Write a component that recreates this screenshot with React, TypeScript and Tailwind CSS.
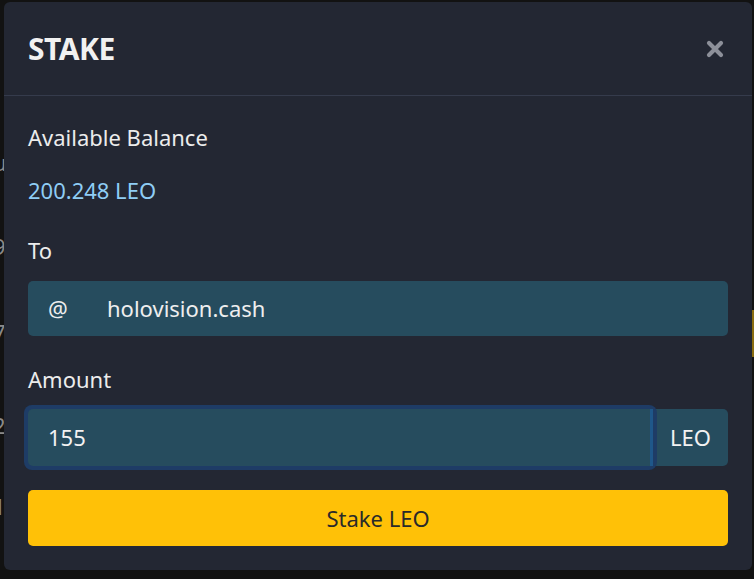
import React from "react";

export default function App() {
  const font = { fontFamily: '"Noto Sans", "Open Sans", sans-serif' };
  return (
    <div className="relative w-[754px] h-[579px] bg-[#121212] overflow-hidden" style={font}>
      {/* underlying page slivers */}
      <div className="absolute left-[-7px] top-0 text-[22px] text-[#8a8a8a] leading-none">
        <div className="absolute top-[151px]">u</div>
        <div className="absolute top-[235px]">9</div>
        <div className="absolute top-[321px]">7</div>
        <div className="absolute top-[414px]">2</div>
        <div className="absolute top-[495px]">1</div>
      </div>
      <div className="absolute right-0 top-[310px] w-[2px] h-[47px] bg-[#8a6d10]" />

      <div className="relative ml-[4px] mt-[2px] w-[748px] h-[568px] rounded-[6px] bg-[#232733] flex flex-col">
        <div className="h-[94px] px-6 flex items-center justify-between border-b border-[#353b4c]">
          <div className="text-[30px] font-bold text-[#f1f1f1] tracking-[-0.5px]">STAKE</div>
          <svg width="18" height="18" viewBox="0 0 18 18" className="mr-[4px]">
            <path d="M3 3 L15 15 M15 3 L3 15" stroke="#8d909a" strokeWidth="4.2" strokeLinecap="round" />
          </svg>
        </div>
        <div className="px-6 pt-[28px] flex flex-col">
          <div className="text-[22px] leading-[26px] text-[#ececec]">Available Balance</div>
          <div className="mt-[27px] text-[22px] leading-[26px] text-[#8fcdf5]">200.248 LEO</div>
          <div className="mt-[34px] text-[22px] leading-[26px] text-[#ececec]">To</div>
          <div className="mt-[18px] h-[55px] rounded-[5px] bg-[#264c5e] flex items-center text-[22px] text-[#eeeeee]">
            <span className="pl-[20px] w-[79px]">@</span>
            <span>holovision.cash</span>
          </div>
          <div className="mt-[30px] text-[22px] leading-[26px] text-[#ececec]">Amount</div>
          <div className="mt-[17px] h-[57px] flex">
            <div className="relative flex-1">
              <div className="absolute inset-[-4px] rounded-[8px] bg-[#1e3c66]" />
              <div className="relative h-full rounded-l-[5px] bg-[#264c5e] border-r-[3px] border-[#1f5789] flex items-center pl-[20px] text-[22px] text-[#f2f2f2]">
                155
              </div>
            </div>
            <div className="w-[75px] h-full rounded-r-[5px] bg-[#264c5e] flex items-center justify-center text-[22px] text-[#f2f2f2]">
              LEO
            </div>
          </div>
          <div className="mt-[24px] h-[56px] rounded-[5px] bg-[#ffc107] flex items-center justify-center text-[22px] text-[#2a2a2a]">
            Stake LEO
          </div>
        </div>
      </div>
    </div>
  );
}
